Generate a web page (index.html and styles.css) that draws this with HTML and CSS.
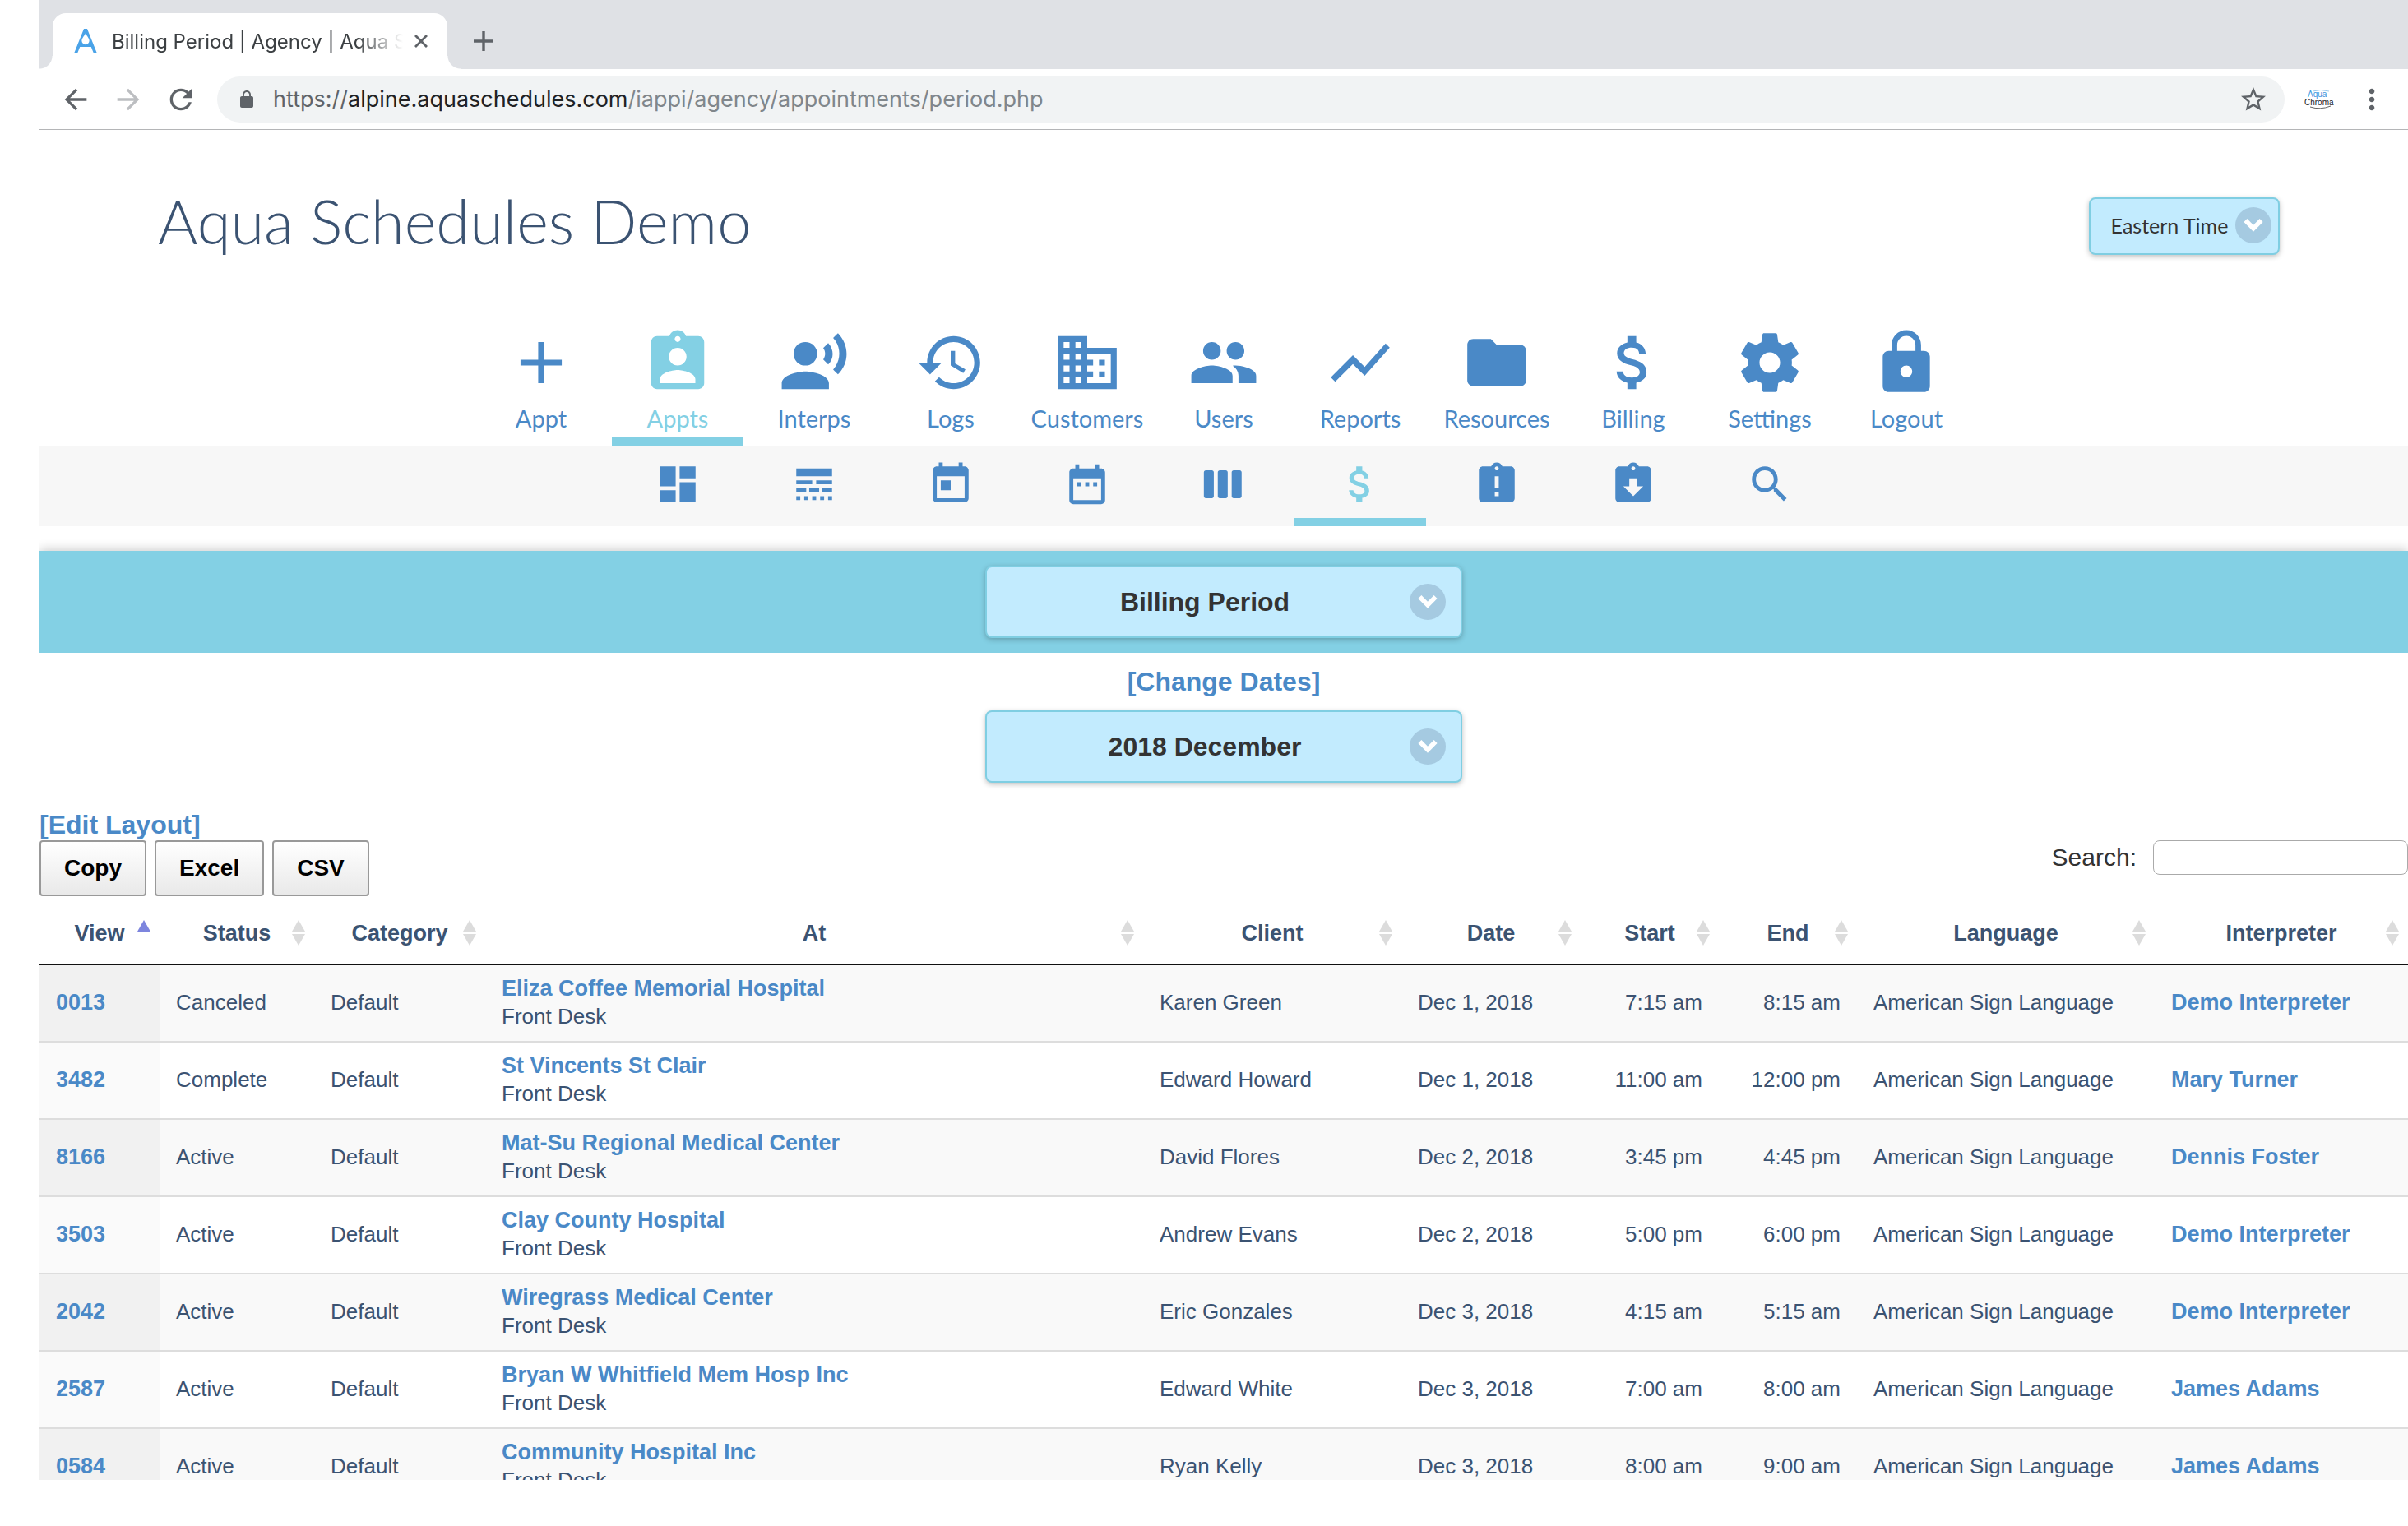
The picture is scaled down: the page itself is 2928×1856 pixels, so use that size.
FILE: index.html
```html
<!DOCTYPE html>
<html lang="en">
<head>
    <meta charset="UTF-8">
    <title>Billing Period | Agency | Aqua Schedules</title>
    <link rel="stylesheet" href="styles.css">
</head>
<body>
    <svg class="sprite">
        <symbol id="chevron" viewBox="0 0 44 44">
            <circle cx="22" cy="22" r="22" fill="#a5cae1"/>
            <path d="M12.4 16l9.6 9.8 9.6-9.8" fill="none" stroke="#fff" stroke-width="5.6"/>
        </symbol>
    </svg>
    <div id="window">
        <div id="tab-bar">
            <div class="tab">
                <svg class="favicon" viewBox="0 0 28 30"><path d="M12 0h4l12 30h-4l-3.200-8H7.200L4 30H0z" fill="#4aa3e8"/><path d="M14 5.600c-2 4-4.600 6-4.600 9a4.600 4.600 0 0 0 9.200 0c0-3-2.600-5-4.600-9z" fill="#fff"/></svg>
                <span class="tab-title">Billing Period | Agency | Aqua S</span>
                <button class="icon-btn tab-close" aria-label="Close tab"><svg viewBox="0 0 16 16"><path d="M1 1l14 14M15 1L1 15" stroke="#5f6368" stroke-width="2.800"/></svg></button>
            </div>
            <button class="icon-btn new-tab" aria-label="New tab"><svg viewBox="0 0 24 24"><path d="M12 0v24M0 12h24" stroke="#5f6368" stroke-width="3.400"/></svg></button>
        </div>
        <div id="toolbar">
            <button class="icon-btn" aria-label="Back"><svg viewBox="0 0 24 24"><path d="M20 11H7.830l5.590-5.590L12 4l-8 8 8 8 1.410-1.410L7.830 13H20v-2z"/></svg></button>
            <button class="icon-btn off" aria-label="Forward"><svg viewBox="0 0 24 24"><path d="M12 4l-1.410 1.410L16.170 11H4v2h12.170l-5.580 5.590L12 20l8-8z"/></svg></button>
            <button class="icon-btn" aria-label="Reload"><svg viewBox="0 0 24 24"><path d="M17.650 6.350C16.200 4.900 14.210 4 12 4c-4.420 0-7.990 3.580-7.990 8s3.570 8 7.990 8c3.730 0 6.840-2.550 7.730-6h-2.080c-.82 2.330-3.040 4-5.650 4-3.310 0-6-2.690-6-6s2.690-6 6-6c1.660 0 3.140.69 4.220 1.780L13 11h7V4l-2.350 2.350z"/></svg></button>
            <div id="address">
                <svg class="lock" viewBox="0 0 24 24"><path d="M18 8h-1V6c0-2.760-2.240-5-5-5S7 3.240 7 6v2H6c-1.100 0-2 .9-2 2v10c0 1.100.9 2 2 2h12c1.100 0 2-.9 2-2V10c0-1.100-.9-2-2-2zm-2.900 0H8.900V6c0-1.710 1.390-3.100 3.100-3.100s3.100 1.390 3.100 3.100v2z"/></svg>
                <span class="url">https://<b>alpine.aquaschedules.com</b><i>/iappi/agency/appointments/period.php</i></span>
                <svg class="star" viewBox="0 0 24 24"><path d="M22 9.240l-7.190-.62L12 2 9.190 8.630 2 9.240l5.460 4.730L5.820 21 12 17.270 18.180 21l-1.630-7.030L22 9.240zM12 15.400l-3.760 2.270 1-4.280-3.320-2.880 4.380-.38L12 6.100l1.710 4.040 4.380.38-3.320 2.880 1 4.280L12 15.400z"/></svg>
            </div>
            <svg class="extension" viewBox="0 0 36 24">
                <path d="M10 2q10-3 20 0" fill="none" stroke="#9cc8ea"/>
                <text x="4" y="9" font-size="10" fill="#3c97de">Aqua</text>
                <text x="0" y="19" font-size="10" fill="#222">Chroma</text>
                <path d="M7 21q12 4 25-1" fill="none" stroke="#666"/>
            </svg>
            <button class="icon-btn" aria-label="Menu"><svg viewBox="0 0 24 24"><path d="M12 8c1.100 0 2-.9 2-2s-.9-2-2-2-2 .9-2 2 .9 2 2 2zm0 2c-1.100 0-2 .9-2 2s.9 2 2 2 2-.9 2-2-.9-2-2-2zm0 6c-1.100 0-2 .9-2 2s.9 2 2 2 2-.9 2-2-.9-2-2-2z"/></svg></button>
        </div>

        <header>
            <h1>Aqua Schedules Demo</h1>
            <div class="select zone">
                <select aria-label="Time zone"><option>Eastern Time</option></select>
                <svg><use href="#chevron"/></svg>
            </div>
        </header>

        <nav id="main-nav">
            <a href="#"><svg viewBox="0 0 24 24"><path d="M19 13h-6v6h-2v-6H5v-2h6V5h2v6h6v2z"/></svg>Appt</a>
            <a href="#" class="selected"><svg viewBox="0 0 24 24"><path d="M19 3h-4.180C14.400 1.840 13.300 1 12 1c-1.300 0-2.400.84-2.820 2H5c-1.100 0-2 .9-2 2v14c0 1.100.9 2 2 2h14c1.100 0 2-.9 2-2V5c0-1.100-.9-2-2-2zm-7 0c.55 0 1 .45 1 1s-.45 1-1 1-1-.45-1-1 .45-1 1-1zm0 4c1.660 0 3 1.340 3 3s-1.340 3-3 3-3-1.340-3-3 1.340-3 3-3zm6 12H6v-1.400c0-2 4-3.100 6-3.100s6 1.100 6 3.100V19z"/></svg>Appts</a>
            <a href="#"><svg viewBox="0 0 24 24"><circle cx="9" cy="9" r="4"/><path d="M9 15c-2.670 0-8 1.340-8 4v2h16v-2c0-2.660-5.330-4-8-4zm7.760-9.640l-1.680 1.690c.84 1.180.84 2.710 0 3.890l1.680 1.690c2.020-2.020 2.020-5.070 0-7.270zM20.070 2l-1.630 1.630c2.770 3.020 2.770 7.560 0 10.740L20.070 16c3.900-3.890 3.910-9.950 0-14z"/></svg>Interps</a>
            <a href="#"><svg viewBox="0 0 24 24"><path d="M13 3c-4.970 0-9 4.030-9 9H1l3.890 3.890.07.14L9 12H6c0-3.870 3.130-7 7-7s7 3.130 7 7-3.130 7-7 7c-1.930 0-3.680-.79-4.940-2.060l-1.420 1.420C8.270 19.990 10.510 21 13 21c4.970 0 9-4.030 9-9s-4.030-9-9-9zm-1 5v5l4.280 2.540.72-1.210-3.500-2.080V8H12z"/></svg>Logs</a>
            <a href="#"><svg viewBox="0 0 24 24"><path d="M12 7V3H2v18h20V7H12zM6 19H4v-2h2v2zm0-4H4v-2h2v2zm0-4H4V9h2v2zm0-4H4V5h2v2zm4 12H8v-2h2v2zm0-4H8v-2h2v2zm0-4H8V9h2v2zm0-4H8V5h2v2zm10 12h-8v-2h2v-2h-2v-2h2v-2h-2V9h8v10zm-2-8h-2v2h2v-2zm0 4h-2v2h2v-2z"/></svg>Customers</a>
            <a href="#"><svg viewBox="0 0 24 24"><path d="M16 11c1.660 0 2.990-1.340 2.990-3S17.660 5 16 5c-1.660 0-3 1.340-3 3s1.340 3 3 3zm-8 0c1.660 0 2.990-1.340 2.990-3S9.660 5 8 5C6.340 5 5 6.340 5 8s1.340 3 3 3zm0 2c-2.330 0-7 1.170-7 3.500V19h14v-2.500c0-2.330-4.670-3.500-7-3.500zm8 0c-.29 0-.62.02-.97.05 1.160.84 1.970 1.970 1.970 3.450V19h6v-2.500c0-2.330-4.670-3.500-7-3.500z"/></svg>Users</a>
            <a href="#"><svg viewBox="0 0 24 24"><path d="M3.500 18.490l6-6.010 4 4L22 6.920l-1.410-1.410-7.090 7.970-4-4L2 16.990z"/></svg>Reports</a>
            <a href="#"><svg viewBox="0 0 24 24"><path d="M10 4H4c-1.100 0-1.990.9-1.990 2L2 18c0 1.100.9 2 2 2h16c1.100 0 2-.9 2-2V8c0-1.100-.9-2-2-2h-8l-2-2z"/></svg>Resources</a>
            <a href="#"><svg viewBox="0 0 24 24"><path d="M11.800 10.900c-2.270-.59-3-1.200-3-2.150 0-1.090 1.010-1.850 2.700-1.850 1.780 0 2.440.85 2.500 2.100h2.210c-.07-1.720-1.120-3.300-3.210-3.810V3h-3v2.160c-1.940.42-3.500 1.680-3.500 3.610 0 2.310 1.910 3.460 4.700 4.130 2.500.6 3 1.480 3 2.410 0 .69-.49 1.790-2.700 1.790-2.060 0-2.870-.92-2.980-2.100h-2.200c.12 2.190 1.760 3.420 3.680 3.830V21h3v-2.150c1.950-.37 3.500-1.500 3.500-3.550 0-2.840-2.430-3.810-4.700-4.400z"/></svg>Billing</a>
            <a href="#"><svg viewBox="0 0 24 24"><path d="M19.430 12.980c.04-.32.07-.64.07-.98s-.03-.66-.07-.98l2.110-1.650c.19-.15.24-.42.12-.64l-2-3.460c-.12-.22-.39-.3-.61-.22l-2.490 1c-.52-.4-1.080-.73-1.690-.98l-.38-2.650C14.460 2.180 14.250 2 14 2h-4c-.25 0-.46.18-.49.42l-.38 2.650c-.61.25-1.170.59-1.690.98l-2.490-1c-.23-.09-.49 0-.61.22l-2 3.460c-.13.22-.07.49.12.64l2.110 1.650c-.04.32-.07.65-.07.98s.03.66.07.98l-2.110 1.650c-.19.15-.24.42-.12.64l2 3.460c.12.22.39.3.61.22l2.490-1c.52.4 1.080.73 1.690.98l.38 2.650c.03.24.24.42.49.42h4c.25 0 .46-.18.49-.42l.38-2.650c.61-.25 1.170-.59 1.690-.98l2.490 1c.23.09.49 0 .61-.22l2-3.460c.12-.22.07-.49-.12-.64l-2.110-1.650zM12 15.500c-1.930 0-3.500-1.570-3.500-3.500s1.570-3.500 3.500-3.500 3.500 1.570 3.500 3.500-1.570 3.500-3.500 3.500z"/></svg>Settings</a>
            <a href="#"><svg viewBox="0 0 24 24"><path d="M18 8h-1V6c0-2.760-2.240-5-5-5S7 3.240 7 6v2H6c-1.100 0-2 .9-2 2v10c0 1.100.9 2 2 2h12c1.100 0 2-.9 2-2V10c0-1.100-.9-2-2-2zm-6 9c-1.100 0-2-.9-2-2s.9-2 2-2 2 .9 2 2-.9 2-2 2zm3.100-9H8.900V6c0-1.710 1.390-3.100 3.100-3.100 1.710 0 3.100 1.390 3.100 3.100v2z"/></svg>Logout</a>
        </nav>
        <nav id="sub-nav">
            <a href="#" aria-label="Dashboard"><svg viewBox="0 0 24 24"><path d="M3 13h8V3H3v10zm0 8h8v-6H3v6zm10 0h8V11h-8v10zm0-18v6h8V3h-8z"/></svg></a>
            <a href="#" aria-label="Lines"><svg viewBox="0 0 24 24"><path d="M3 16h5v-2H3v2zm6.500 0h5v-2h-5v2zm6.500 0h5v-2h-5v2zM3 20h2v-2H3v2zm4 0h2v-2H7v2zm4 0h2v-2h-2v2zm4 0h2v-2h-2v2zm4 0h2v-2h-2v2zM3 12h8v-2H3v2zm10 0h8v-2h-8v2zM3 4v4h18V4H3z"/></svg></a>
            <a href="#" aria-label="Today"><svg viewBox="0 0 24 24"><path d="M19 3h-1V1h-2v2H8V1H6v2H5c-1.110 0-1.990.9-1.990 2L3 19c0 1.100.89 2 2 2h14c1.100 0 2-.9 2-2V5c0-1.100-.9-2-2-2zm0 16H5V8h14v11zM7 10h5v5H7z"/></svg></a>
            <a href="#" aria-label="Date range"><svg viewBox="0 0 24 24"><path d="M9 11H7v2h2v-2zm4 0h-2v2h2v-2zm4 0h-2v2h2v-2zm2-7h-1V2h-2v2H8V2H6v2H5c-1.110 0-1.990.9-1.990 2L3 20c0 1.100.89 2 2 2h14c1.100 0 2-.9 2-2V6c0-1.100-.9-2-2-2zm0 16H5V9h14v11z"/></svg></a>
            <a href="#" aria-label="Week"><svg viewBox="0 0 24 24"><path d="M6 5H3c-.55 0-1 .45-1 1v12c0 .55.45 1 1 1h3c.55 0 1-.45 1-1V6c0-.55-.45-1-1-1zm14 0h-3c-.55 0-1 .45-1 1v12c0 .55.45 1 1 1h3c.55 0 1-.45 1-1V6c0-.55-.45-1-1-1zm-7 0h-3c-.55 0-1 .45-1 1v12c0 .55.45 1 1 1h3c.55 0 1-.45 1-1V6c0-.55-.45-1-1-1z"/></svg></a>
            <a href="#" class="selected" aria-label="Billing period"><svg viewBox="0 0 24 24"><path d="M11.800 10.900c-2.270-.59-3-1.200-3-2.150 0-1.090 1.010-1.850 2.700-1.850 1.780 0 2.440.85 2.500 2.100h2.210c-.07-1.720-1.120-3.300-3.210-3.810V3h-3v2.160c-1.940.42-3.500 1.680-3.500 3.610 0 2.310 1.910 3.460 4.700 4.130 2.500.6 3 1.480 3 2.410 0 .69-.49 1.790-2.700 1.790-2.060 0-2.870-.92-2.980-2.100h-2.200c.12 2.190 1.760 3.420 3.680 3.830V21h3v-2.150c1.950-.37 3.500-1.500 3.500-3.550 0-2.840-2.430-3.810-4.700-4.400z"/></svg></a>
            <a href="#" aria-label="Late"><svg viewBox="0 0 24 24"><path d="M19 3h-4.180C14.400 1.840 13.300 1 12 1c-1.300 0-2.400.84-2.820 2H5c-1.100 0-2 .9-2 2v14c0 1.100.9 2 2 2h14c1.100 0 2-.9 2-2V5c0-1.100-.9-2-2-2zm-6 15h-2v-2h2v2zm0-4h-2V8h2v6zm-1-9c-.55 0-1-.45-1-1s.45-1 1-1 1 .45 1 1-.45 1-1 1z"/></svg></a>
            <a href="#" aria-label="Returned"><svg viewBox="0 0 24 24"><path d="M19 3h-4.180C14.400 1.840 13.300 1 12 1c-1.300 0-2.400.84-2.820 2H5c-1.100 0-2 .9-2 2v14c0 1.100.9 2 2 2h14c1.100 0 2-.9 2-2V5c0-1.100-.9-2-2-2zm-7 0c.55 0 1 .45 1 1s-.45 1-1 1-1-.45-1-1 .45-1 1-1zm0 15l-5-5h3V9h4v4h3l-5 5z"/></svg></a>
            <a href="#" aria-label="Search"><svg viewBox="0 0 24 24"><path d="M15.500 14h-.79l-.28-.27C15.410 12.590 16 11.110 16 9.500 16 5.910 13.090 3 9.500 3S3 5.910 3 9.500 5.910 16 9.500 16c1.610 0 3.090-.59 4.230-1.570l.27.28v.79l5 4.990L20.490 19l-4.990-5zm-6 0C7.010 14 5 11.990 5 9.500S7.010 5 9.500 5 14 7.010 14 9.500 11.990 14 9.500 14z"/></svg></a>
        </nav>

        <div id="period-bar">
            <div class="select">
                <select aria-label="View"><option>Billing Period</option></select>
                <svg><use href="#chevron"/></svg>
            </div>
        </div>
        <div id="dates">
            <a href="#">[Change Dates]</a>
            <div class="select">
                <select aria-label="Period"><option>2018 December</option></select>
                <svg><use href="#chevron"/></svg>
            </div>
        </div>

        <div id="appointments">
            <a href="#" class="edit-layout">[Edit Layout]</a>
            <div class="table-tools">
                <button>Copy</button>
                <button>Excel</button>
                <button>CSV</button>
                <label for="search">Search:</label>
                <input type="search" id="search">
            </div>
            <table>
                <colgroup>
                    <col class="c-view"><col class="c-status"><col class="c-category"><col><col class="c-client">
                    <col class="c-date"><col class="c-time"><col class="c-time"><col class="c-language"><col class="c-interp">
                </colgroup>
                <thead>
                    <tr>
                        <th class="asc">View</th>
                        <th>Status</th>
                        <th>Category</th>
                        <th>At</th>
                        <th>Client</th>
                        <th>Date</th>
                        <th>Start</th>
                        <th>End</th>
                        <th>Language</th>
                        <th>Interpreter</th>
                    </tr>
                </thead>
                <tbody>
                    <tr>
                        <td><a href="#">0013</a></td>
                        <td>Canceled</td>
                        <td>Default</td>
                        <td><a href="#">Eliza Coffee Memorial Hospital</a><br>Front Desk</td>
                        <td>Karen Green</td>
                        <td>Dec 1, 2018</td>
                        <td class="time">7:15 am</td>
                        <td class="time">8:15 am</td>
                        <td>American Sign Language</td>
                        <td><a href="#">Demo Interpreter</a></td>
                    </tr>
                    <tr>
                        <td><a href="#">3482</a></td>
                        <td>Complete</td>
                        <td>Default</td>
                        <td><a href="#">St Vincents St Clair</a><br>Front Desk</td>
                        <td>Edward Howard</td>
                        <td>Dec 1, 2018</td>
                        <td class="time">11:00 am</td>
                        <td class="time">12:00 pm</td>
                        <td>American Sign Language</td>
                        <td><a href="#">Mary Turner</a></td>
                    </tr>
                    <tr>
                        <td><a href="#">8166</a></td>
                        <td>Active</td>
                        <td>Default</td>
                        <td><a href="#">Mat-Su Regional Medical Center</a><br>Front Desk</td>
                        <td>David Flores</td>
                        <td>Dec 2, 2018</td>
                        <td class="time">3:45 pm</td>
                        <td class="time">4:45 pm</td>
                        <td>American Sign Language</td>
                        <td><a href="#">Dennis Foster</a></td>
                    </tr>
                    <tr>
                        <td><a href="#">3503</a></td>
                        <td>Active</td>
                        <td>Default</td>
                        <td><a href="#">Clay County Hospital</a><br>Front Desk</td>
                        <td>Andrew Evans</td>
                        <td>Dec 2, 2018</td>
                        <td class="time">5:00 pm</td>
                        <td class="time">6:00 pm</td>
                        <td>American Sign Language</td>
                        <td><a href="#">Demo Interpreter</a></td>
                    </tr>
                    <tr>
                        <td><a href="#">2042</a></td>
                        <td>Active</td>
                        <td>Default</td>
                        <td><a href="#">Wiregrass Medical Center</a><br>Front Desk</td>
                        <td>Eric Gonzales</td>
                        <td>Dec 3, 2018</td>
                        <td class="time">4:15 am</td>
                        <td class="time">5:15 am</td>
                        <td>American Sign Language</td>
                        <td><a href="#">Demo Interpreter</a></td>
                    </tr>
                    <tr>
                        <td><a href="#">2587</a></td>
                        <td>Active</td>
                        <td>Default</td>
                        <td><a href="#">Bryan W Whitfield Mem Hosp Inc</a><br>Front Desk</td>
                        <td>Edward White</td>
                        <td>Dec 3, 2018</td>
                        <td class="time">7:00 am</td>
                        <td class="time">8:00 am</td>
                        <td>American Sign Language</td>
                        <td><a href="#">James Adams</a></td>
                    </tr>
                    <tr>
                        <td><a href="#">0584</a></td>
                        <td>Active</td>
                        <td>Default</td>
                        <td><a href="#">Community Hospital Inc</a><br>Front Desk</td>
                        <td>Ryan Kelly</td>
                        <td>Dec 3, 2018</td>
                        <td class="time">8:00 am</td>
                        <td class="time">9:00 am</td>
                        <td>American Sign Language</td>
                        <td><a href="#">James Adams</a></td>
                    </tr>
                </tbody>
            </table>
        </div>
    </div>
</body>
</html>
```
FILE: styles.css
```css
*{
    margin: 0;
    padding: 0;
    box-sizing: border-box;
}
body{
    background: #fff;
    color: #333;
    font-family: "Liberation Sans", Arial, sans-serif;
    font-size: 26px;
}
a{
    color: #4a89c7;
    font-weight: bold;
    text-decoration: none;
}
svg{
    display: block;
    flex: none;
}
.sprite{
    display: none;
}
#window{
    height: calc(100vh - 56px);
    margin-left: 48px;
    overflow: hidden;
}

/* browser bar */
#tab-bar{
    display: flex;
    align-items: flex-end;
    height: 84px;
    padding-left: 16px;
    background: #dfe1e5;
    font-family: Inter, sans-serif;
}
.tab{
    position: relative;
    display: flex;
    align-items: center;
    width: 480px;
    height: 68px;
    padding: 0 24px 0 26px;
    background: #fff;
    border-radius: 16px 16px 0 0;
}
.tab::before,.tab::after{
    content: "";
    position: absolute;
    bottom: 0;
    width: 16px;
    height: 16px;
}
.tab::before{
    left: -16px;
    background: radial-gradient(circle at 0 0, transparent 15px, #fff 16px);
}
.tab::after{
    right: -16px;
    background: radial-gradient(circle at 100% 0, transparent 15px, #fff 16px);
}
.favicon{
    width: 28px;
    height: 30px;
    margin-right: 18px;
}
.tab-title{
    flex: 1;
    overflow: hidden;
    white-space: nowrap;
    font-size: 24px;
    color: #3c4043;
    -webkit-mask-image: linear-gradient(to right, #000 84%, transparent);
    mask-image: linear-gradient(to right, #000 84%, transparent);
}
.icon-btn{
    border: none;
    background: none;
}
.icon-btn svg{
    width: 40px;
    height: 40px;
    fill: #5f6368;
}
.off svg{
    fill: #bcbec1;
}
.tab-close{
    margin-left: 14px;
}
.tab-close svg{
    width: 16px;
    height: 16px;
}
.new-tab{
    align-self: center;
    padding: 16px 0 0;
    margin-left: 32px;
}
.new-tab svg{
    width: 24px;
    height: 24px;
}
#toolbar{
    display: flex;
    align-items: center;
    gap: 24px;
    height: 74px;
    padding: 0 24px;
    border-bottom: 1px solid #b4b5b7;
}
#address{
    flex: 1;
    display: flex;
    align-items: center;
    height: 56px;
    padding: 0 20px 0 24px;
    background: #f1f3f4;
    border-radius: 28px;
    font-family: Inter, sans-serif;
    font-size: 27px;
    color: #5f6368;
}
.lock{
    width: 24px;
    height: 24px;
    fill: #5f6368;
}
.url{
    flex: 1;
    margin-left: 20px;
}
.url b{
    font-weight: normal;
    color: #202124;
}
.url i{
    font-style: normal;
    color: #80868b;
}
.star{
    width: 36px;
    height: 36px;
    fill: #5f6368;
}
.extension{
    width: 36px;
    height: 24px;
    margin-right: 2px;
}

/* header */
header{
    display: flex;
    justify-content: space-between;
    align-items: flex-start;
    padding: 66px 156px 0 144px;
    font-family: Lato, sans-serif;
}
h1{
    font-size: 74px;
    line-height: 90px;
    font-weight: 300;
    color: #3b5372;
}
.select{
    position: relative;
    width: 580px;
}
.select select{
    display: block;
    width: 100%;
    height: 88px;
    padding: 0 66px 0 20px;
    appearance: none;
    border: 2px solid #7fcee2;
    border-radius: 8px;
    background: #c2ebfe;
    box-shadow: 0 2px 6px rgba(0,0,0,.25);
    color: #333;
    font: bold 32px "Liberation Sans", Arial, sans-serif;
    text-align: center;
    text-align-last: center;
}
.select svg{
    position: absolute;
    right: 20px;
    top: 22px;
    width: 44px;
    height: 44px;
    pointer-events: none;
}
.zone{
    width: 232px;
    margin-top: 16px;
}
.zone select{
    height: 70px;
    padding: 0 54px 2px 18px;
    font: 25px Lato, sans-serif;
}
.zone svg{
    right: 10px;
    top: 12px;
}

/* navigation */
#main-nav,#sub-nav{
    display: flex;
    justify-content: center;
    gap: 6px;
}
#main-nav{
    margin-top: 84px;
}
#main-nav a,#sub-nav a{
    display: flex;
    flex-direction: column;
    align-items: center;
    width: 160px;
    border-bottom: 10px solid transparent;
    font: 29px/38px Lato, sans-serif;
}
#main-nav svg{
    width: 86px;
    height: 86px;
    margin-bottom: 6px;
}
#main-nav a{
    padding-bottom: 4px;
}
nav svg{
    fill: currentColor;
}
#sub-nav{
    height: 98px;
    background: #f7f7f7;
}
#sub-nav a{
    justify-content: center;
}
#sub-nav svg{
    width: 58px;
    height: 58px;
    margin-top: 6px;
}
#main-nav .selected,#sub-nav .selected{
    color: #83d0e4;
    border-bottom-color: #83d0e4;
}

/* billing period */
#period-bar{
    display: flex;
    justify-content: center;
    margin-top: 30px;
    padding: 18px 0;
    background: #83d0e4;
    box-shadow: 0 -2px 12px rgba(0,0,0,.2);
}
#dates{
    position: relative;
    display: flex;
    flex-direction: column;
    align-items: center;
    padding-top: 14px;
    background: #fff;
    font-size: 32px;
    line-height: 42px;
}
#dates .select{
    margin-top: 14px;
}

/* table */
#appointments{
    padding-top: 32px;
}
.edit-layout{
    display: block;
    font-size: 32px;
    line-height: 38px;
}
.table-tools{
    display: flex;
    align-items: flex-start;
    gap: 10px;
}
.table-tools button{
    height: 68px;
    padding: 0 28px;
    border: 2px solid #999;
    border-radius: 4px;
    background: linear-gradient(#fff, #e9e9e9);
    color: #000;
    font: bold 28px "Liberation Sans", Arial, sans-serif;
}
.table-tools label{
    margin-left: auto;
    padding-right: 10px;
    font-size: 30px;
    line-height: 42px;
}
.table-tools input{
    width: 310px;
    height: 42px;
    border: 1px solid #aaa;
    border-radius: 8px;
    font-size: 26px;
}
table{
    width: 100%;
    margin-top: 8px;
    table-layout: fixed;
    border-collapse: separate;
    border-spacing: 0;
    color: #3b5372;
    line-height: 34px;
}
.c-view{
    width: 146px;
}
.c-status{
    width: 188px;
}
.c-category{
    width: 208px;
}
.c-client{
    width: 314px;
}
.c-date{
    width: 218px;
}
.c-time{
    width: 168px;
}
.c-language{
    width: 362px;
}
.c-interp{
    width: 308px;
}
th{
    position: relative;
    padding: 20px 0;
    border-bottom: 2px solid #111;
    font-size: 27px;
}
/* sort arrows */
th::before,th::after{
    content: "";
    position: absolute;
    right: 11px;
    border: 8px solid transparent;
}
th::before{
    top: 21px;
    border-top: none;
    border-bottom: 14px solid #dcdcdc;
}
th::after{
    top: 38px;
    border-bottom: none;
    border-top: 14px solid #dcdcdc;
}
th.asc::before{
    border-bottom-color: #7d85de;
}
th.asc::after{
    display: none;
}
td{
    padding: 11px 20px 13px;
    border-bottom: 2px solid #ddd;
    white-space: nowrap;
}
td a{
    font-size: 27px;
}
tbody tr:nth-child(odd) td{
    background: #f9f9f9;
}
tbody tr td:first-child{
    background: #fafafa;
}
tbody tr:nth-child(odd) td:first-child{
    background: #f1f1f1;
}
.time{
    text-align: right;
}
```
